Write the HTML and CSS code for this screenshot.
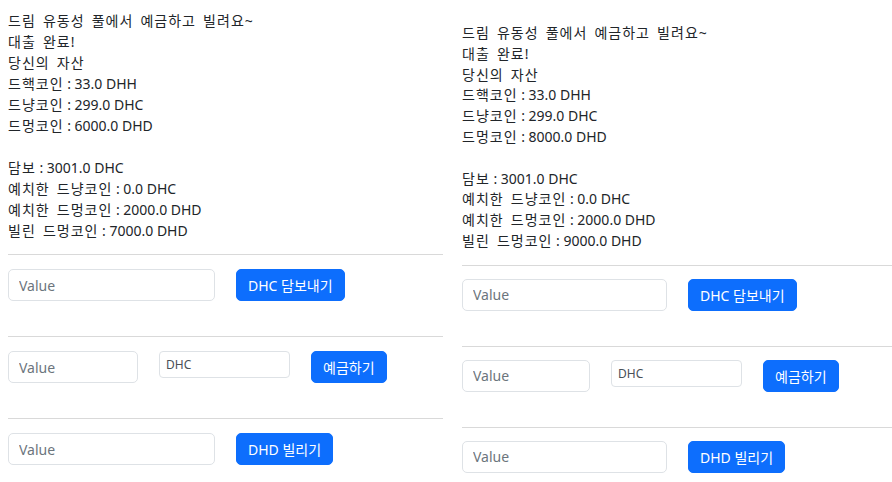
FILE: index.html
```html
<!DOCTYPE html>
<html>
<head lang="ko">
    <meta charset="UTF-8">
    <title>드림 유동성 풀</title>
    <link rel="stylesheet" href="styles.css">
</head>
<body>
    <div id="page">
        <div class="panel panel-left">
            <div class="info">
                <div><span class="ko">드림 유동성 풀에서 예금하고 빌려요~</span></div>
                <div><span class="ko">대출 완료!</span></div>
                <div><span class="ko">당신의 자산</span></div>
                <div><span class="ko">드핵코인</span> : 33.0 DHH</div>
                <div><span class="ko">드냥코인</span> : 299.0 DHC</div>
                <div><span class="ko">드멍코인</span> : 6000.0 DHD</div>
                <br>
                <div><span class="ko">담보</span> : 3001.0 DHC</div>
                <div><span class="ko">예치한 드냥코인</span> : 0.0 DHC</div>
                <div><span class="ko">예치한 드멍코인</span> : 2000.0 DHD</div>
                <div><span class="ko">빌린 드멍코인</span> : 7000.0 DHD</div>
            </div>
            <hr>
            <div class="form-row">
                <input class="field field-wide" type="text" placeholder="Value">
                <button class="btn">DHC 담보내기</button>
            </div>
            <hr>
            <div class="form-row">
                <input class="field field-short" type="text" placeholder="Value">
                <input class="field field-coin" type="text" value="DHC">
                <button class="btn">예금하기</button>
            </div>
            <hr>
            <div class="form-row">
                <input class="field field-wide" type="text" placeholder="Value">
                <button class="btn">DHD 빌리기</button>
            </div>
        </div>

        <div class="panel panel-right">
            <div class="info">
                <div><span class="ko">드림 유동성 풀에서 예금하고 빌려요~</span></div>
                <div><span class="ko">대출 완료!</span></div>
                <div><span class="ko">당신의 자산</span></div>
                <div><span class="ko">드핵코인</span> : 33.0 DHH</div>
                <div><span class="ko">드냥코인</span> : 299.0 DHC</div>
                <div><span class="ko">드멍코인</span> : 8000.0 DHD</div>
                <br>
                <div><span class="ko">담보</span> : 3001.0 DHC</div>
                <div><span class="ko">예치한 드냥코인</span> : 0.0 DHC</div>
                <div><span class="ko">예치한 드멍코인</span> : 2000.0 DHD</div>
                <div><span class="ko">빌린 드멍코인</span> : 9000.0 DHD</div>
            </div>
            <hr>
            <div class="form-row">
                <input class="field field-wide" type="text" placeholder="Value">
                <button class="btn">DHC 담보내기</button>
            </div>
            <hr>
            <div class="form-row">
                <input class="field field-short" type="text" placeholder="Value">
                <input class="field field-coin" type="text" value="DHC">
                <button class="btn">예금하기</button>
            </div>
            <hr>
            <div class="form-row">
                <input class="field field-wide" type="text" placeholder="Value">
                <button class="btn">DHD 빌리기</button>
            </div>
        </div>
    </div>
</body>
</html>
```

FILE: styles.css
```css
*{
    margin: 0;
    padding: 0;
    box-sizing: border-box;
}
body{
    background: #fff;
    color: #212529;
    font-family: "Noto Sans", "Noto Sans CJK KR", sans-serif;
    font-size: 14px;
    line-height: 21px;
}
#page{
    display: flex;
    width: 892px;
}
.panel{
    display: flex;
    flex-direction: column;
}
.panel-left{
    width: 446px;
    padding: 10px 3px 0 8px;
}
.panel-right{
    flex: 1;
    padding: 23px 0 0 16px;
}
.panel-right .info{
    line-height: 20.8px;
}
.ko{
    letter-spacing: 1px;
    word-spacing: 2.5px;
}
hr{
    border: 0;
    border-top: 1px solid #d9d9d9;
    margin: 13px 0 14px;
}
.panel-right hr{
    margin: 13px 0 13px;
}
.form-row{
    display: flex;
    align-items: flex-start;
    gap: 21px;
    margin-bottom: 22px;
}
.field{
    height: 32px;
    padding: 0 10px;
    border: 1px solid #dee2e6;
    border-radius: 5px;
    font-family: "Noto Sans", "Noto Sans CJK KR", sans-serif;
    font-size: 14px;
    color: #212529;
    background: #fff;
    outline: none;
}
.field::placeholder{
    color: #6c757d;
}
.field-wide{
    width: 207px;
}
.field-short{
    width: 130px;
}
.field-coin{
    width: 131px;
    height: 27px;
    padding: 0 6px;
    font-size: 12px;
    color: #495057;
    border-radius: 4px;
}
.panel-right .field-wide{
    width: 205px;
}
.panel-right .field-short{
    width: 128px;
}
.btn{
    height: 32px;
    padding: 0 11px;
    border: 1px solid #0d6efd;
    border-radius: 5px;
    background: #0d6efd;
    color: #fff;
    font-family: "Noto Sans", "Noto Sans CJK KR", sans-serif;
    font-size: 14px;
    cursor: pointer;
}
```
